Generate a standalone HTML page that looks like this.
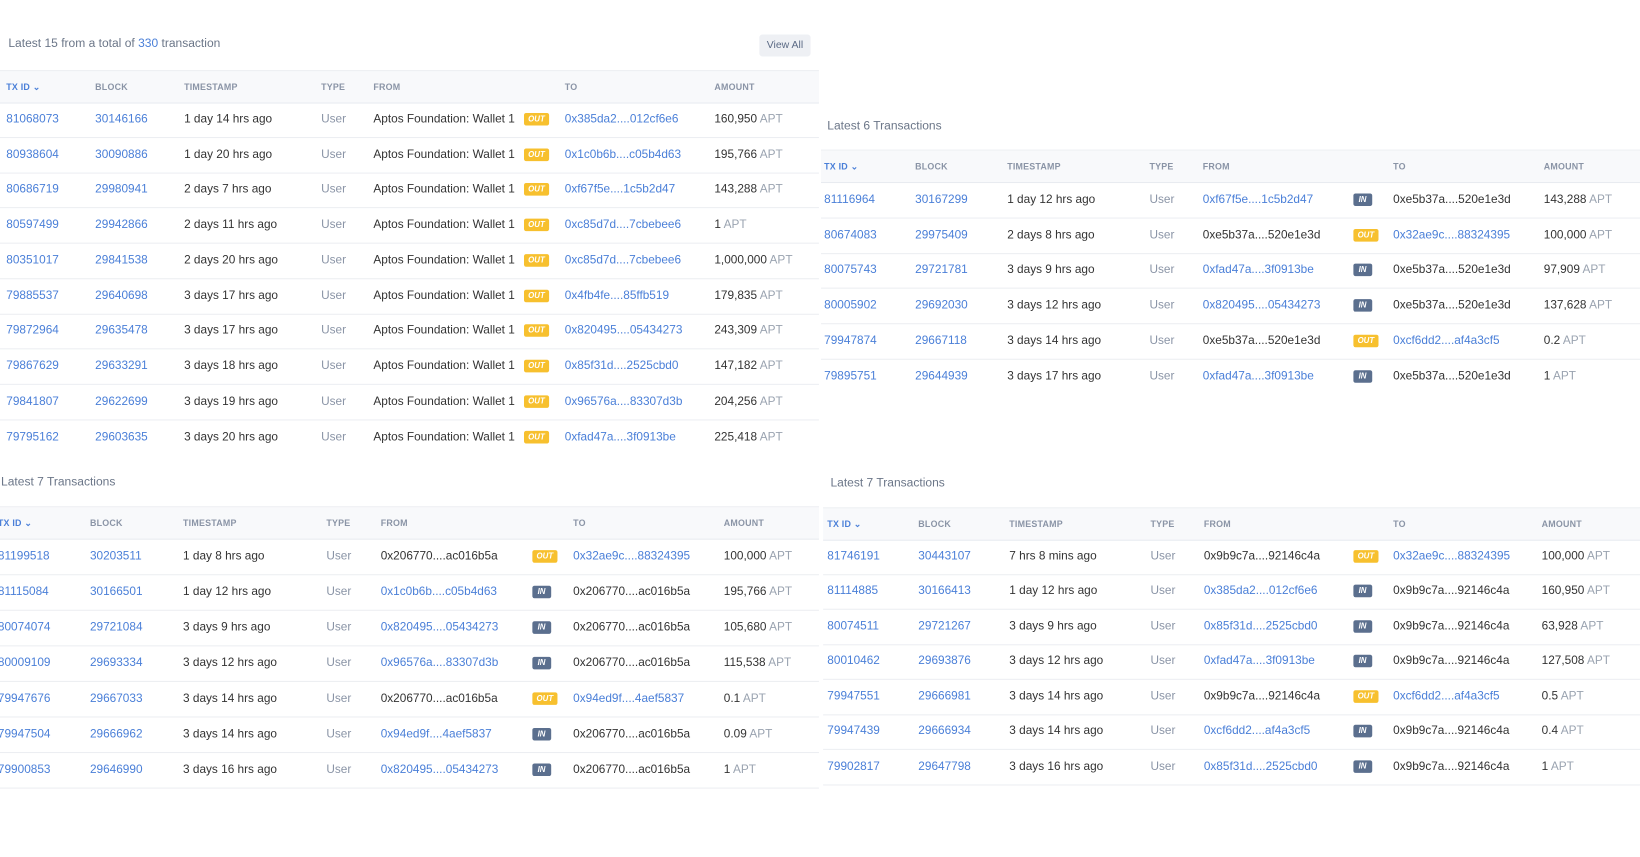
<!DOCTYPE html>
<html><head><meta charset="utf-8"><style>
html,body{margin:0;padding:0;background:#fff;width:1640px;height:856px;overflow:hidden}
#w{position:absolute;left:0;top:0;width:1568px;height:819px;transform:scale(1.0459);transform-origin:0 0;font-family:"Liberation Sans",sans-serif;font-size:11.3px;color:#333}
.t{position:absolute;font-size:11.5px;color:#6b7688}
.t b{font-weight:normal;color:#4a7fd8}
.btn{position:absolute;left:726px;top:33px;width:49px;height:21px;background:#eef0f4;border-radius:3px;color:#5b6a85;font-size:10px;line-height:21px;text-align:center}
.hd{position:absolute;height:30px;background:#f8f9fb;border-top:1px solid #eef0f3;border-bottom:1px solid #e8ebf0}
.hd span{position:absolute;line-height:30px;font-size:8.5px;font-weight:bold;color:#8a94a6;letter-spacing:.2px}
.hd span.b{color:#4a7fd8}
.r{position:absolute;height:34px;border-bottom:1px solid #eceef2}
.r span{position:absolute;line-height:34px;white-space:nowrap}
.l{color:#4a7fd8}
.g{color:#8a94a6}
.a i{font-style:normal;color:#9aa3b0}
.bd{display:inline-block;height:12px;line-height:12px;padding:0 4px;font-size:7.5px;font-weight:bold;color:#fff;border-radius:2px;vertical-align:middle}
.o{background:#f7c02e}.n{background:#5b6f8e;padding:0 5px}
</style></head><body><div id="w">

<div class="t" style="left:8px;top:36px">Latest 15 from a total of <b>330</b> transaction</div>
<div class="btn">View All</div>
<div class="t" style="left:791px;top:115px">Latest 6 Transactions</div>
<div class="t" style="left:1px;top:455px">Latest 7 Transactions</div>
<div class="t" style="left:794px;top:456px">Latest 7 Transactions</div>

<!-- Panel 1 -->
<div class="hd" style="left:0;top:67px;width:783px"><span class="b" style="left:6px">TX ID ⌄</span><span style="left:91px">BLOCK</span><span style="left:176px">TIMESTAMP</span><span style="left:307px">TYPE</span><span style="left:357px">FROM</span><span style="left:540px">TO</span><span style="left:683px">AMOUNT</span></div>
<div id="p1"></div>
<!-- Panel 2 -->
<div class="hd" style="left:785px;top:143px;width:783px"><span class="b" style="left:3px">TX ID ⌄</span><span style="left:90px">BLOCK</span><span style="left:178px">TIMESTAMP</span><span style="left:314px">TYPE</span><span style="left:365px">FROM</span><span style="left:547px">TO</span><span style="left:691px">AMOUNT</span></div>
<!-- Panel 3 -->
<div class="hd" style="left:0;top:484px;width:783px"><span class="b" style="left:-2px">TX ID ⌄</span><span style="left:86px">BLOCK</span><span style="left:175px">TIMESTAMP</span><span style="left:312px">TYPE</span><span style="left:364px">FROM</span><span style="left:548px">TO</span><span style="left:692px">AMOUNT</span></div>
<!-- Panel 4 -->
<div class="hd" style="left:787px;top:485px;width:781px"><span class="b" style="left:4px">TX ID ⌄</span><span style="left:91px">BLOCK</span><span style="left:178px">TIMESTAMP</span><span style="left:313px">TYPE</span><span style="left:364px">FROM</span><span style="left:545px">TO</span><span style="left:687px">AMOUNT</span></div>

<!-- P1 rows -->
<div class="r" style="left:0;top:97px;width:783px"><span class="l" style="left:6px">81068073</span><span class="l" style="left:91px">30146166</span><span style="left:176px">1 day 14 hrs ago</span><span class="g" style="left:307px">User</span><span style="left:357px">Aptos Foundation: Wallet 1</span><span style="left:501px"><em class="bd o">OUT</em></span><span class="l" style="left:540px">0x385da2....012cf6e6</span><span class="a" style="left:683px">160,950 <i>APT</i></span></div>
<div class="r" style="left:0;top:131px;width:783px"><span class="l" style="left:6px">80938604</span><span class="l" style="left:91px">30090886</span><span style="left:176px">1 day 20 hrs ago</span><span class="g" style="left:307px">User</span><span style="left:357px">Aptos Foundation: Wallet 1</span><span style="left:501px"><em class="bd o">OUT</em></span><span class="l" style="left:540px">0x1c0b6b....c05b4d63</span><span class="a" style="left:683px">195,766 <i>APT</i></span></div>
<div class="r" style="left:0;top:164px;width:783px"><span class="l" style="left:6px">80686719</span><span class="l" style="left:91px">29980941</span><span style="left:176px">2 days 7 hrs ago</span><span class="g" style="left:307px">User</span><span style="left:357px">Aptos Foundation: Wallet 1</span><span style="left:501px"><em class="bd o">OUT</em></span><span class="l" style="left:540px">0xf67f5e....1c5b2d47</span><span class="a" style="left:683px">143,288 <i>APT</i></span></div>
<div class="r" style="left:0;top:198px;width:783px"><span class="l" style="left:6px">80597499</span><span class="l" style="left:91px">29942866</span><span style="left:176px">2 days 11 hrs ago</span><span class="g" style="left:307px">User</span><span style="left:357px">Aptos Foundation: Wallet 1</span><span style="left:501px"><em class="bd o">OUT</em></span><span class="l" style="left:540px">0xc85d7d....7cbebee6</span><span class="a" style="left:683px">1 <i>APT</i></span></div>
<div class="r" style="left:0;top:232px;width:783px"><span class="l" style="left:6px">80351017</span><span class="l" style="left:91px">29841538</span><span style="left:176px">2 days 20 hrs ago</span><span class="g" style="left:307px">User</span><span style="left:357px">Aptos Foundation: Wallet 1</span><span style="left:501px"><em class="bd o">OUT</em></span><span class="l" style="left:540px">0xc85d7d....7cbebee6</span><span class="a" style="left:683px">1,000,000 <i>APT</i></span></div>
<div class="r" style="left:0;top:266px;width:783px"><span class="l" style="left:6px">79885537</span><span class="l" style="left:91px">29640698</span><span style="left:176px">3 days 17 hrs ago</span><span class="g" style="left:307px">User</span><span style="left:357px">Aptos Foundation: Wallet 1</span><span style="left:501px"><em class="bd o">OUT</em></span><span class="l" style="left:540px">0x4fb4fe....85ffb519</span><span class="a" style="left:683px">179,835 <i>APT</i></span></div>
<div class="r" style="left:0;top:299px;width:783px"><span class="l" style="left:6px">79872964</span><span class="l" style="left:91px">29635478</span><span style="left:176px">3 days 17 hrs ago</span><span class="g" style="left:307px">User</span><span style="left:357px">Aptos Foundation: Wallet 1</span><span style="left:501px"><em class="bd o">OUT</em></span><span class="l" style="left:540px">0x820495....05434273</span><span class="a" style="left:683px">243,309 <i>APT</i></span></div>
<div class="r" style="left:0;top:333px;width:783px"><span class="l" style="left:6px">79867629</span><span class="l" style="left:91px">29633291</span><span style="left:176px">3 days 18 hrs ago</span><span class="g" style="left:307px">User</span><span style="left:357px">Aptos Foundation: Wallet 1</span><span style="left:501px"><em class="bd o">OUT</em></span><span class="l" style="left:540px">0x85f31d....2525cbd0</span><span class="a" style="left:683px">147,182 <i>APT</i></span></div>
<div class="r" style="left:0;top:367px;width:783px"><span class="l" style="left:6px">79841807</span><span class="l" style="left:91px">29622699</span><span style="left:176px">3 days 19 hrs ago</span><span class="g" style="left:307px">User</span><span style="left:357px">Aptos Foundation: Wallet 1</span><span style="left:501px"><em class="bd o">OUT</em></span><span class="l" style="left:540px">0x96576a....83307d3b</span><span class="a" style="left:683px">204,256 <i>APT</i></span></div>
<div class="r" style="left:0;top:401px;width:783px;border-bottom:none"><span class="l" style="left:6px">79795162</span><span class="l" style="left:91px">29603635</span><span style="left:176px">3 days 20 hrs ago</span><span class="g" style="left:307px">User</span><span style="left:357px">Aptos Foundation: Wallet 1</span><span style="left:501px"><em class="bd o">OUT</em></span><span class="l" style="left:540px">0xfad47a....3f0913be</span><span class="a" style="left:683px">225,418 <i>APT</i></span></div>

<!-- P2 rows -->
<div class="r" style="left:785px;top:174px;width:783px"><span class="l" style="left:3px">81116964</span><span class="l" style="left:90px">30167299</span><span style="left:178px">1 day 12 hrs ago</span><span class="g" style="left:314px">User</span><span class="l" style="left:365px">0xf67f5e....1c5b2d47</span><span style="left:509px"><em class="bd n">IN</em></span><span style="left:547px">0xe5b37a....520e1e3d</span><span class="a" style="left:691px">143,288 <i>APT</i></span></div>
<div class="r" style="left:785px;top:208px;width:783px"><span class="l" style="left:3px">80674083</span><span class="l" style="left:90px">29975409</span><span style="left:178px">2 days 8 hrs ago</span><span class="g" style="left:314px">User</span><span style="left:365px">0xe5b37a....520e1e3d</span><span style="left:509px"><em class="bd o">OUT</em></span><span class="l" style="left:547px">0x32ae9c....88324395</span><span class="a" style="left:691px">100,000 <i>APT</i></span></div>
<div class="r" style="left:785px;top:241px;width:783px"><span class="l" style="left:3px">80075743</span><span class="l" style="left:90px">29721781</span><span style="left:178px">3 days 9 hrs ago</span><span class="g" style="left:314px">User</span><span class="l" style="left:365px">0xfad47a....3f0913be</span><span style="left:509px"><em class="bd n">IN</em></span><span style="left:547px">0xe5b37a....520e1e3d</span><span class="a" style="left:691px">97,909 <i>APT</i></span></div>
<div class="r" style="left:785px;top:275px;width:783px"><span class="l" style="left:3px">80005902</span><span class="l" style="left:90px">29692030</span><span style="left:178px">3 days 12 hrs ago</span><span class="g" style="left:314px">User</span><span class="l" style="left:365px">0x820495....05434273</span><span style="left:509px"><em class="bd n">IN</em></span><span style="left:547px">0xe5b37a....520e1e3d</span><span class="a" style="left:691px">137,628 <i>APT</i></span></div>
<div class="r" style="left:785px;top:309px;width:783px"><span class="l" style="left:3px">79947874</span><span class="l" style="left:90px">29667118</span><span style="left:178px">3 days 14 hrs ago</span><span class="g" style="left:314px">User</span><span style="left:365px">0xe5b37a....520e1e3d</span><span style="left:509px"><em class="bd o">OUT</em></span><span class="l" style="left:547px">0xcf6dd2....af4a3cf5</span><span class="a" style="left:691px">0.2 <i>APT</i></span></div>
<div class="r" style="left:785px;top:343px;width:783px;border-bottom:none"><span class="l" style="left:3px">79895751</span><span class="l" style="left:90px">29644939</span><span style="left:178px">3 days 17 hrs ago</span><span class="g" style="left:314px">User</span><span class="l" style="left:365px">0xfad47a....3f0913be</span><span style="left:509px"><em class="bd n">IN</em></span><span style="left:547px">0xe5b37a....520e1e3d</span><span class="a" style="left:691px">1 <i>APT</i></span></div>

<!-- P3 rows -->
<div class="r" style="left:0;top:515px;width:783px"><span class="l" style="left:-2px">81199518</span><span class="l" style="left:86px">30203511</span><span style="left:175px">1 day 8 hrs ago</span><span class="g" style="left:312px">User</span><span style="left:364px">0x206770....ac016b5a</span><span style="left:509px"><em class="bd o">OUT</em></span><span class="l" style="left:548px">0x32ae9c....88324395</span><span class="a" style="left:692px">100,000 <i>APT</i></span></div>
<div class="r" style="left:0;top:549px;width:783px"><span class="l" style="left:-2px">81115084</span><span class="l" style="left:86px">30166501</span><span style="left:175px">1 day 12 hrs ago</span><span class="g" style="left:312px">User</span><span class="l" style="left:364px">0x1c0b6b....c05b4d63</span><span style="left:509px"><em class="bd n">IN</em></span><span style="left:548px">0x206770....ac016b5a</span><span class="a" style="left:692px">195,766 <i>APT</i></span></div>
<div class="r" style="left:0;top:583px;width:783px"><span class="l" style="left:-2px">80074074</span><span class="l" style="left:86px">29721084</span><span style="left:175px">3 days 9 hrs ago</span><span class="g" style="left:312px">User</span><span class="l" style="left:364px">0x820495....05434273</span><span style="left:509px"><em class="bd n">IN</em></span><span style="left:548px">0x206770....ac016b5a</span><span class="a" style="left:692px">105,680 <i>APT</i></span></div>
<div class="r" style="left:0;top:617px;width:783px"><span class="l" style="left:-2px">80009109</span><span class="l" style="left:86px">29693334</span><span style="left:175px">3 days 12 hrs ago</span><span class="g" style="left:312px">User</span><span class="l" style="left:364px">0x96576a....83307d3b</span><span style="left:509px"><em class="bd n">IN</em></span><span style="left:548px">0x206770....ac016b5a</span><span class="a" style="left:692px">115,538 <i>APT</i></span></div>
<div class="r" style="left:0;top:651px;width:783px"><span class="l" style="left:-2px">79947676</span><span class="l" style="left:86px">29667033</span><span style="left:175px">3 days 14 hrs ago</span><span class="g" style="left:312px">User</span><span style="left:364px">0x206770....ac016b5a</span><span style="left:509px"><em class="bd o">OUT</em></span><span class="l" style="left:548px">0x94ed9f....4aef5837</span><span class="a" style="left:692px">0.1 <i>APT</i></span></div>
<div class="r" style="left:0;top:685px;width:783px"><span class="l" style="left:-2px">79947504</span><span class="l" style="left:86px">29666962</span><span style="left:175px">3 days 14 hrs ago</span><span class="g" style="left:312px">User</span><span class="l" style="left:364px">0x94ed9f....4aef5837</span><span style="left:509px"><em class="bd n">IN</em></span><span style="left:548px">0x206770....ac016b5a</span><span class="a" style="left:692px">0.09 <i>APT</i></span></div>
<div class="r" style="left:0;top:719px;width:783px"><span class="l" style="left:-2px">79900853</span><span class="l" style="left:86px">29646990</span><span style="left:175px">3 days 16 hrs ago</span><span class="g" style="left:312px">User</span><span class="l" style="left:364px">0x820495....05434273</span><span style="left:509px"><em class="bd n">IN</em></span><span style="left:548px">0x206770....ac016b5a</span><span class="a" style="left:692px">1 <i>APT</i></span></div>

<!-- P4 rows -->
<div class="r" style="left:787px;top:515px;width:781px"><span class="l" style="left:4px">81746191</span><span class="l" style="left:91px">30443107</span><span style="left:178px">7 hrs 8 mins ago</span><span class="g" style="left:313px">User</span><span style="left:364px">0x9b9c7a....92146c4a</span><span style="left:507px"><em class="bd o">OUT</em></span><span class="l" style="left:545px">0x32ae9c....88324395</span><span class="a" style="left:687px">100,000 <i>APT</i></span></div>
<div class="r" style="left:787px;top:548px;width:781px"><span class="l" style="left:4px">81114885</span><span class="l" style="left:91px">30166413</span><span style="left:178px">1 day 12 hrs ago</span><span class="g" style="left:313px">User</span><span class="l" style="left:364px">0x385da2....012cf6e6</span><span style="left:507px"><em class="bd n">IN</em></span><span style="left:545px">0x9b9c7a....92146c4a</span><span class="a" style="left:687px">160,950 <i>APT</i></span></div>
<div class="r" style="left:787px;top:582px;width:781px"><span class="l" style="left:4px">80074511</span><span class="l" style="left:91px">29721267</span><span style="left:178px">3 days 9 hrs ago</span><span class="g" style="left:313px">User</span><span class="l" style="left:364px">0x85f31d....2525cbd0</span><span style="left:507px"><em class="bd n">IN</em></span><span style="left:545px">0x9b9c7a....92146c4a</span><span class="a" style="left:687px">63,928 <i>APT</i></span></div>
<div class="r" style="left:787px;top:615px;width:781px"><span class="l" style="left:4px">80010462</span><span class="l" style="left:91px">29693876</span><span style="left:178px">3 days 12 hrs ago</span><span class="g" style="left:313px">User</span><span class="l" style="left:364px">0xfad47a....3f0913be</span><span style="left:507px"><em class="bd n">IN</em></span><span style="left:545px">0x9b9c7a....92146c4a</span><span class="a" style="left:687px">127,508 <i>APT</i></span></div>
<div class="r" style="left:787px;top:649px;width:781px"><span class="l" style="left:4px">79947551</span><span class="l" style="left:91px">29666981</span><span style="left:178px">3 days 14 hrs ago</span><span class="g" style="left:313px">User</span><span style="left:364px">0x9b9c7a....92146c4a</span><span style="left:507px"><em class="bd o">OUT</em></span><span class="l" style="left:545px">0xcf6dd2....af4a3cf5</span><span class="a" style="left:687px">0.5 <i>APT</i></span></div>
<div class="r" style="left:787px;top:682px;width:781px"><span class="l" style="left:4px">79947439</span><span class="l" style="left:91px">29666934</span><span style="left:178px">3 days 14 hrs ago</span><span class="g" style="left:313px">User</span><span class="l" style="left:364px">0xcf6dd2....af4a3cf5</span><span style="left:507px"><em class="bd n">IN</em></span><span style="left:545px">0x9b9c7a....92146c4a</span><span class="a" style="left:687px">0.4 <i>APT</i></span></div>
<div class="r" style="left:787px;top:716px;width:781px"><span class="l" style="left:4px">79902817</span><span class="l" style="left:91px">29647798</span><span style="left:178px">3 days 16 hrs ago</span><span class="g" style="left:313px">User</span><span class="l" style="left:364px">0x85f31d....2525cbd0</span><span style="left:507px"><em class="bd n">IN</em></span><span style="left:545px">0x9b9c7a....92146c4a</span><span class="a" style="left:687px">1 <i>APT</i></span></div>

</div></body></html>
